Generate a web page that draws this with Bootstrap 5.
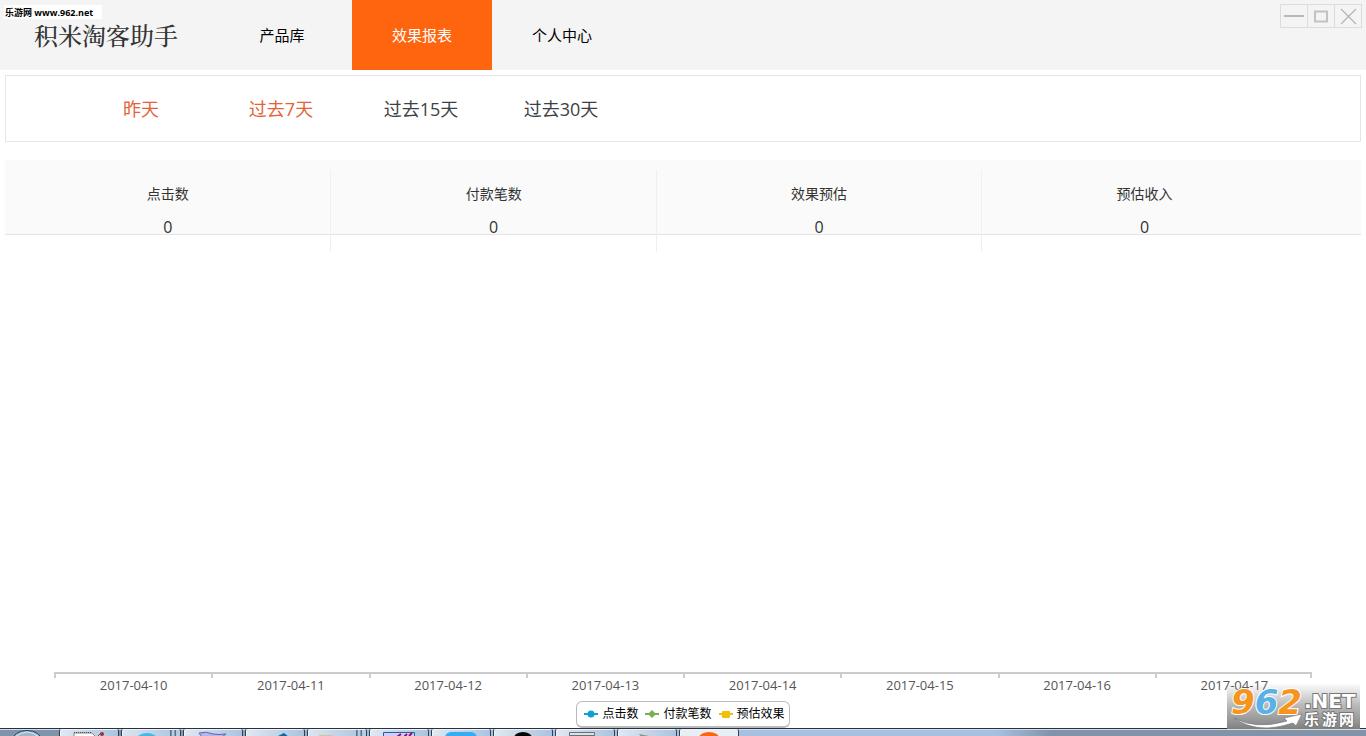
<!DOCTYPE html>
<html lang="zh-CN">
<head>
<meta charset="utf-8">
<meta name="viewport" content="width=device-width, initial-scale=1">
<title>积米淘客助手</title>
<link href="https://cdn.jsdelivr.net/npm/bootstrap@5.3.0/dist/css/bootstrap.min.css" rel="stylesheet">
<style>
body { font-family: "Open Sans", "Noto Sans CJK SC", sans-serif; color: #333; background: #fff; }
a { text-decoration: none; }
.app-header { background: #f4f4f4; height: 70px; }
.brand-box { width: 212px; padding-left: 34px; }
.brand-name { font: 500 24px/32px "Noto Serif CJK SC", "Noto Sans CJK SC", serif; color: #333; }
.site-tag { left: 4px; top: 5px; width: 98px; height: 14px; padding-left: 1px; background: #fff; color: #000; font: 700 9px/15px "Open Sans", "Noto Sans CJK SC", sans-serif; white-space: nowrap; }
.main-link { width: 140px; height: 70px; font-size: 15px; color: #000; }
.main-link.active { background: #ff640f; color: #fff; }
.win-group { border: 1px solid #dcdcdc; margin: 4px 4px 0 0; }
.win-btn { width: 27px; height: 22px; padding: 0; border: 0; background: transparent; }
.win-btn:first-child { width: 26px; }
.win-btn + .win-btn { border-left: 1px solid #dcdcdc; }
.range-bar { margin: 5px 5px 0; height: 67px; padding-left: 65px; border: 1px solid #e6e6e6; }
.range-link { width: 140px; font-size: 18px; line-height: 28px; color: #3c4145; }
.range-link.hot { color: #e4633a; }
.stats { margin: 18px 5px 0; height: 75px; background: #fafafa; border-bottom: 1px solid #e4e4e4; }
.stat { width: 24%; height: 82px; margin-top: 10px; padding-top: 13px; }
.stat + .stat { border-left: 1px solid #efefef; }
.stat-label { font-size: 14px; line-height: 22px; margin-bottom: 11px; font-weight: 400; }
.stat-value { font-size: 16px; line-height: 22px; margin: 0; }
.axis { margin: 0 54px; border-top: 2px solid #ccc; height: 29px; }
.axis-cell { flex: 1 1 0; height: 25px; padding-left: 2px; font-size: 13px; line-height: 23px; color: #555; background: linear-gradient(#ccc, #ccc) left top / 2px 4px no-repeat; }
.axis-cell:last-child { background: linear-gradient(#ccc, #ccc) left top / 2px 4px no-repeat, linear-gradient(#ccc, #ccc) right top / 2px 4px no-repeat; }
.legend-box { height: 27px; border: 2px solid #bbb; border-width: 1px 1px 2px; border-radius: 6px; padding: 0 4px 0 7px; gap: 7px; font-size: 12px; color: #000; }
.taskbar { height: 8px; padding-left: 59px; gap: 2px; border-top: 1px solid #26323f; background: linear-gradient(90deg, #8093a9 0 10%, #a7c0df 30%, #a7c0df 73%, #8093a9 77%); box-shadow: inset 0 1px #d3dfec; }
.task-btn { width: 60px; height: 8px; padding: 0; border: 1px solid #2f4053; border-width: 0 1px; border-radius: 2px 2px 0 0; background: linear-gradient(90deg, #e0e9f3, #c6d5e7 50%, #abc3e0); box-shadow: inset 1px 1px #eef4fa; }
.task-btn.stacked { background: linear-gradient(90deg, #dbe5f0, #b4c9e2 82%, #59708b 83% 85%, #b9cbdf 86% 90%, #59708b 91% 93%, #b9cbdf 94%); }
.task-btn.current { background: #e7eef5; }
.start-btn { left: 10px; width: 34px; height: 7px; padding: 0; border: 0; background: transparent; }
.watermark { right: 6px; bottom: 6px; width: 133px; height: 47px; }
</style>
</head>
<body>
<div class="d-flex flex-column vh-100 position-relative overflow-hidden">
  <header class="app-header d-flex position-relative flex-shrink-0">
    <span class="site-tag position-absolute">乐游网 www.962.net</span>
    <div class="brand-box d-flex align-items-center"><h1 class="brand-name m-0">积米淘客助手</h1></div>
    <nav class="d-flex">
      <a class="main-link d-flex align-items-center justify-content-center" href="#">产品库</a>
      <a class="main-link active d-flex align-items-center justify-content-center" href="#" aria-current="page">效果报表</a>
      <a class="main-link d-flex align-items-center justify-content-center" href="#">个人中心</a>
    </nav>
    <div class="win-group d-flex ms-auto align-self-start">
      <button class="win-btn d-flex" type="button" aria-label="最小化"><svg width="26" height="22"><path d="M3 11H23" stroke="#b9b9b9" stroke-width="2"/></svg></button>
      <button class="win-btn d-flex" type="button" aria-label="最大化"><svg width="26" height="22"><path d="M7 6.500H19V16.500H7Z" fill="none" stroke="#c2c2c2" stroke-width="2"/></svg></button>
      <button class="win-btn d-flex" type="button" aria-label="关闭"><svg width="26" height="22"><path d="M6 4L21 19M21 4L6 19" stroke="#b5b5b5" stroke-width="1.300"/></svg></button>
    </div>
  </header>

  <nav class="range-bar d-flex align-items-center flex-shrink-0">
    <a class="range-link hot text-center" href="#">昨天</a>
    <a class="range-link hot text-center" href="#">过去7天</a>
    <a class="range-link text-center" href="#">过去15天</a>
    <a class="range-link text-center" href="#">过去30天</a>
  </nav>

  <section class="stats d-flex flex-shrink-0 text-center">
    <div class="stat"><h2 class="stat-label">点击数</h2><p class="stat-value">0</p></div>
    <div class="stat"><h2 class="stat-label">付款笔数</h2><p class="stat-value">0</p></div>
    <div class="stat"><h2 class="stat-label">效果预估</h2><p class="stat-value">0</p></div>
    <div class="stat"><h2 class="stat-label">预估收入</h2><p class="stat-value">0</p></div>
  </section>

  <section class="flex-grow-1 d-flex flex-column justify-content-end">
    <div class="axis d-flex text-center">
      <div class="axis-cell">2017-04-10</div>
      <div class="axis-cell">2017-04-11</div>
      <div class="axis-cell">2017-04-12</div>
      <div class="axis-cell">2017-04-13</div>
      <div class="axis-cell">2017-04-14</div>
      <div class="axis-cell">2017-04-15</div>
      <div class="axis-cell">2017-04-16</div>
      <div class="axis-cell">2017-04-17</div>
    </div>
    <div class="legend-box d-flex align-items-center align-self-center">
      <span class="d-flex align-items-center"><svg class="me-1" width="14" height="10"><path d="M0 5H14" stroke="#129fcf" stroke-width="2"/><circle cx="7" cy="5" r="3.500" fill="#129fcf"/></svg>点击数</span>
      <span class="d-flex align-items-center"><svg class="me-1" width="14" height="10"><path d="M0 5H14" stroke="#75b152" stroke-width="2"/><path d="M7 1L11 5L7 9L3 5Z" fill="#75b152"/></svg>付款笔数</span>
      <span class="d-flex align-items-center"><svg class="me-1" width="14" height="10"><path d="M0 5H14" stroke="#f3bd0c" stroke-width="2"/><rect x="3" y="2" width="8" height="7" rx="1" fill="#f3bd0c"/></svg>预估效果</span>
    </div>
  </section>

  <footer class="taskbar d-flex flex-shrink-0 position-relative overflow-hidden">
    <button class="start-btn position-absolute d-flex" type="button" aria-label="开始"><svg width="34" height="7"><ellipse cx="17" cy="12" rx="15" ry="10.500" fill="#9fb6ca" stroke="#1d4763"/><path d="M5 8Q17-2 29 8" fill="none" stroke="#d7e8f2"/></svg></button>
    <button class="task-btn d-flex" type="button" aria-label="记事本"><svg width="58" height="8"><path d="M14 4H32L36 8H14Z" fill="#fafafa" stroke="#888"/><path d="M14 3.500H32" stroke="#555" stroke-dasharray="1 1"/><path d="M37 8L41 4" stroke="#555"/><circle cx="42" cy="5" r="2" fill="#96363d"/></svg></button>
    <button class="task-btn stacked d-flex" type="button" aria-label="浏览器"><svg width="58" height="8"><ellipse cx="25" cy="10" rx="10" ry="6" fill="#43b8e8"/></svg></button>
    <button class="task-btn d-flex" type="button" aria-label="文档"><svg width="58" height="8"><path d="M15 4Q23 2 29 5Q35 6 42 5L38 8H18Z" fill="#b8b4ee" stroke="#6562ae"/></svg></button>
    <button class="task-btn d-flex" type="button" aria-label="编辑器"><svg width="58" height="8"><path d="M30 8L38 4L43 8Z" fill="#0868a8"/></svg></button>
    <button class="task-btn stacked d-flex" type="button" aria-label="文件夹"><svg width="58" height="8"><path d="M11 8V6H25V8Z" fill="#d5c58f"/></svg></button>
    <button class="task-btn d-flex" type="button" aria-label="图片"><svg width="58" height="8"><path d="M13.500 8V3.500H44.500V8" fill="#d4cdf5" stroke="#275cae"/><path d="M27 8L31 5M34 8L37 5M39 7L42 4" stroke="#8e1464" stroke-width="2"/></svg></button>
    <button class="task-btn d-flex" type="button" aria-label="聊天"><svg width="58" height="8"><rect x="13" y="3" width="32" height="12" rx="6" fill="#36acf5"/></svg></button>
    <button class="task-btn d-flex" type="button" aria-label="音乐"><svg width="58" height="8"><ellipse cx="29" cy="9" rx="9" ry="6" fill="#050505"/></svg></button>
    <button class="task-btn d-flex" type="button" aria-label="窗口"><svg width="58" height="8"><path d="M13.500 8V3.500H38.500V8M13.500 6.500H38.500" fill="#dce1e7" stroke="#6b7076"/></svg></button>
    <button class="task-btn d-flex" type="button" aria-label="工具"><svg width="58" height="8"><path d="M21 5L31 7L30 8H23Z" fill="#8d9189"/></svg></button>
    <button class="task-btn current d-flex" type="button" aria-label="积米淘客助手"><svg width="58" height="8"><ellipse cx="29" cy="9" rx="10" ry="6" fill="#fc660f"/></svg></button>
  </footer>

  <svg class="watermark position-absolute" viewBox="0 0 133 47" role="img" aria-label="962.NET 乐游网">
    <defs><linearGradient id="shade" x2="0" y2="1"><stop stop-color="#999" stop-opacity="0"/><stop offset=".5" stop-color="#999" stop-opacity=".7"/><stop offset="1" stop-color="#808080"/></linearGradient></defs>
    <rect width="133" height="46" fill="url(#shade)"/><path d="M0 46.500H133" stroke="#ddd"/>
    <text x="4" y="31" font-family="DejaVu Sans, sans-serif" font-weight="700" font-style="italic" font-size="34" fill="#f7941d" stroke="#fff" stroke-width="2" paint-order="stroke">9<tspan fill="#5ab1e6">6</tspan>2</text>
    <path d="M7 35Q29 47 60 38L57 35L75 31L69 43L66 40Q30 52 7 35Z" fill="#fff" stroke="#777" stroke-width=".7"/>
    <g fill="#fff" stroke="#777" stroke-width="2" paint-order="stroke" font-weight="700">
      <text x="77" y="25" font-size="20" font-family="DejaVu Sans, sans-serif">.NET</text>
      <text x="77 95 112" y="42" font-size="15" font-family="Noto Sans CJK SC, sans-serif">乐游网</text>
    </g>
  </svg>
</div>
<script src="https://cdn.jsdelivr.net/npm/bootstrap@5.3.0/dist/js/bootstrap.bundle.min.js"></script>
</body>
</html>
